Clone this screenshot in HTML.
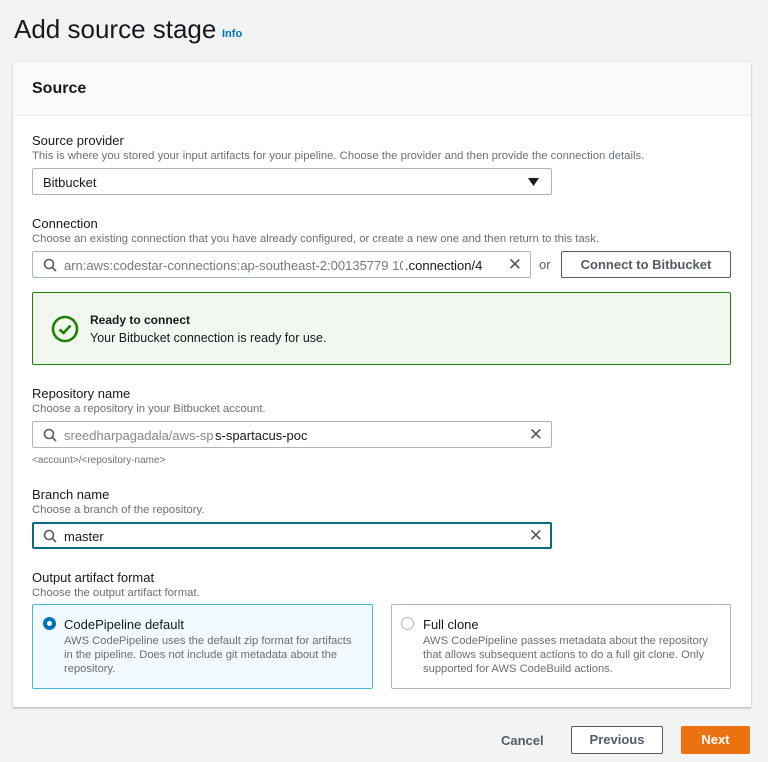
<!DOCTYPE html>
<html><head><meta charset="utf-8"><style>
*{box-sizing:border-box;margin:0;padding:0}
body{width:768px;height:762px;background:#f2f3f3;font-family:"Liberation Sans",sans-serif;color:#16191f;position:relative;overflow:hidden}
.a{position:absolute}
h1{position:absolute;left:14px;top:14px;font-size:26px;font-weight:normal;color:#16191f}
.info{position:absolute;left:222px;top:28px;font-size:11px;color:#0073bb;font-weight:bold}
.card{position:absolute;left:13px;top:62px;width:738px;height:645px;background:#fff;box-shadow:0 1px 2px rgba(0,0,0,.3)}
.hdr{position:absolute;left:0;top:0;width:100%;height:54px;background:#fafafa;border-bottom:1px solid #eaeded}
.hdr span{position:absolute;left:19px;top:18px;font-size:16px;font-weight:bold}
.lbl{position:absolute;left:32px;font-size:13px;color:#16191f}
.desc{position:absolute;left:32px;font-size:11.3px;color:#687078}
.inp{position:absolute;left:32px;height:27px;border:1px solid #aab7b8;border-radius:2px;background:#fff;font-size:13px}
.inp .t{position:absolute;left:31px;top:6px}
.x{position:absolute;right:8px;top:3px;font-size:17px;color:#545b64}
.btn{position:absolute;border:1px solid #545b64;border-radius:2px;font-size:13px;font-weight:bold;color:#545b64;text-align:center;background:#fff}
.opt{position:absolute;top:604px;width:341px;height:85px;border:1px solid #aab7b8;border-radius:2px}
.opt .tt{position:absolute;left:31px;top:12px;font-size:13px}
.opt .dd{position:absolute;left:31px;top:29px;font-size:11.2px;color:#687078;line-height:14px;width:300px}
</style></head><body>
<h1>Add source stage</h1><span class="info">Info</span>
<div class="card"><div class="hdr"><span>Source</span></div></div>

<div class="lbl" style="top:133px">Source provider</div>
<div class="desc" style="top:150px">This is where you stored your input artifacts for your pipeline. Choose the provider and then provide the connection details.</div>
<div class="inp" style="top:168px;width:520px"><span class="a" style="left:10px;top:6px">Bitbucket</span>
<svg class="a" style="right:12px;top:9px" width="11" height="8"><path d="M0 0h11L5.5 8z" fill="#16191f"/></svg></div>

<div class="lbl" style="top:216px">Connection</div>
<div class="desc" style="top:233px">Choose an existing connection that you have already configured, or create a new one and then return to this task.</div>
<div class="inp" style="top:251px;width:499px;overflow:hidden">
<svg class="a" style="left:10px;top:6px" width="14" height="14"><circle cx="6" cy="6" r="4.5" fill="none" stroke="#545b64" stroke-width="1.6"/><path d="M9.3 9.3L13 13" stroke="#545b64" stroke-width="1.6"/></svg>
<span class="t" style="color:#777">arn:aws:codestar-connections:ap-southeast-2:00135779 1075</span><span class="a" style="left:370px;top:6px;background:#fff;padding-left:2px">.connection/4</span><span class="x" style="background:#fff">✕</span></div>
<div class="a" style="left:539px;top:257px;font-size:13px;color:#545b64">or</div>
<div class="btn" style="left:561px;top:251px;width:170px;height:27px;line-height:25px">Connect to Bitbucket</div>

<div class="a" style="left:32px;top:292px;width:699px;height:73px;border:1px solid #1d8102;background:#f2f8f0;border-radius:2px">
<svg class="a" style="left:18px;top:22px" width="28" height="28"><circle cx="14" cy="14" r="12" fill="none" stroke="#1d8102" stroke-width="2.6"/><path d="M8.5 14.5l4 3.5 7-7.5" fill="none" stroke="#1d8102" stroke-width="2.6"/></svg>
<div class="a" style="left:57px;top:20px;font-size:12px;font-weight:bold">Ready to connect</div>
<div class="a" style="left:57px;top:38px;font-size:12.5px">Your Bitbucket connection is ready for use.</div></div>

<div class="lbl" style="top:386px">Repository name</div>
<div class="desc" style="top:403px">Choose a repository in your Bitbucket account.</div>
<div class="inp" style="top:421px;width:520px;overflow:hidden">
<svg class="a" style="left:10px;top:6px" width="14" height="14"><circle cx="6" cy="6" r="4.5" fill="none" stroke="#545b64" stroke-width="1.6"/><path d="M9.3 9.3L13 13" stroke="#545b64" stroke-width="1.6"/></svg>
<span class="t" style="color:#888">sreedharpagadala/aws-spar</span><span class="a" style="left:181px;top:6px;background:#fff;padding-left:1px">s-spartacus-poc</span><span class="x">✕</span></div>
<div class="desc" style="top:455px;font-size:10px">&lt;account&gt;/&lt;repository-name&gt;</div>

<div class="lbl" style="top:487px">Branch name</div>
<div class="desc" style="top:504px">Choose a branch of the repository.</div>
<div class="inp" style="top:522px;width:520px;border:2px solid #0a6b82">
<svg class="a" style="left:9px;top:5px" width="14" height="14"><circle cx="6" cy="6" r="4.5" fill="none" stroke="#545b64" stroke-width="1.6"/><path d="M9.3 9.3L13 13" stroke="#545b64" stroke-width="1.6"/></svg>
<span class="t" style="left:30px;top:5px">master</span><span class="x" style="top:2px;right:7px">✕</span></div>

<div class="lbl" style="top:570px">Output artifact format</div>
<div class="desc" style="top:587px">Choose the output artifact format.</div>
<div class="opt" style="left:32px;border-color:#44b9d6;background:#f1faff">
<div class="a" style="left:10px;top:12px;width:13px;height:13px;border-radius:50%;border:4px solid #0073bb;background:#fff"></div>
<div class="tt">CodePipeline default</div><div class="dd">AWS CodePipeline uses the default zip format for artifacts<br>in the pipeline. Does not include git metadata about the<br>repository.</div></div>
<div class="opt" style="left:391px;width:340px">
<div class="a" style="left:9px;top:12px;width:13px;height:13px;border-radius:50%;border:1px solid #aab7b8"></div>
<div class="tt">Full clone</div><div class="dd">AWS CodePipeline passes metadata about the repository<br>that allows subsequent actions to do a full git clone. Only<br>supported for AWS CodeBuild actions.</div></div>

<div class="a" style="left:501px;top:733px;font-size:13px;font-weight:bold;color:#545b64">Cancel</div>
<div class="btn" style="left:571px;top:726px;width:92px;height:28px;line-height:26px">Previous</div>
<div class="btn" style="left:681px;top:726px;width:69px;height:28px;line-height:28px;border:none;background:#ec7211;color:#fff">Next</div>
</body></html>
